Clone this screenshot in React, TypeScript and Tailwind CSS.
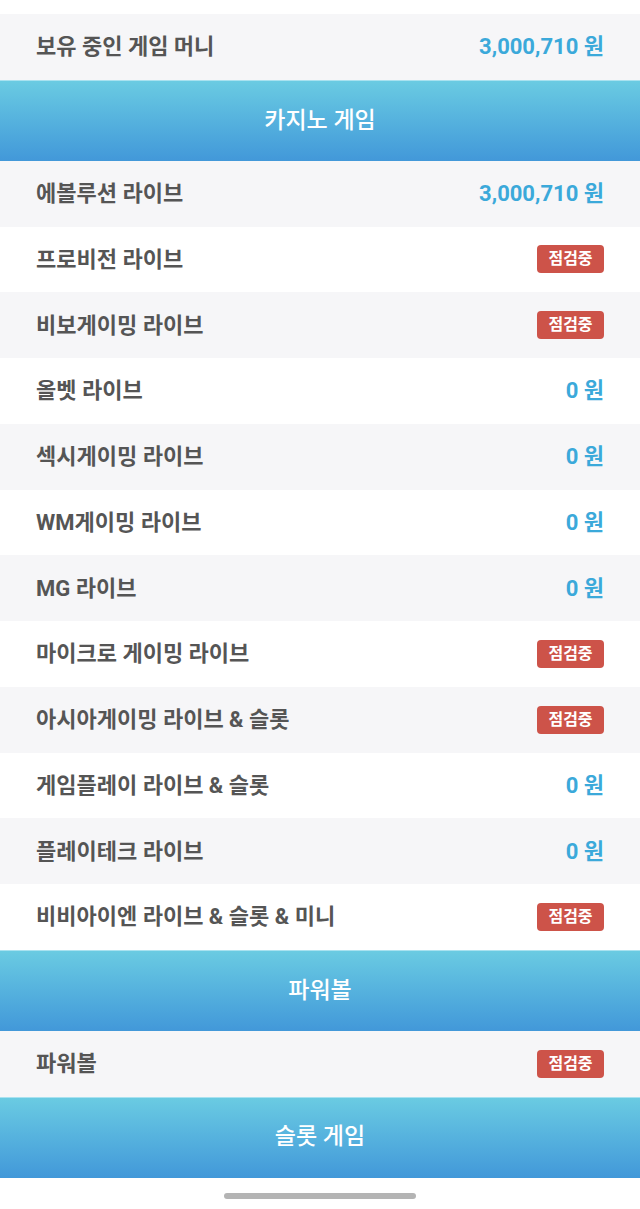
import React from 'react';

type Row = { name: string; amount?: string };

const casinoRows: Row[] = [
  { name: '에볼루션 라이브', amount: '3,000,710' },
  { name: '프로비전 라이브' },
  { name: '비보게이밍 라이브' },
  { name: '올벳 라이브', amount: '0' },
  { name: '섹시게이밍 라이브', amount: '0' },
  { name: 'WM게이밍 라이브', amount: '0' },
  { name: 'MG 라이브', amount: '0' },
  { name: '마이크로 게이밍 라이브' },
  { name: '아시아게이밍 라이브 & 슬롯' },
  { name: '게임플레이 라이브 & 슬롯', amount: '0' },
  { name: '플레이테크 라이브', amount: '0' },
  { name: '비비아이엔 라이브 & 슬롯 & 미니' },
];

const font = { fontFamily: 'Roboto, "Noto Sans CJK KR", "Noto Sans", sans-serif' };

function Header({ title }: { title: string }) {
  return (
    <div className="h-[81px] flex items-center justify-center border-t border-[#a9e2f0] bg-gradient-to-b from-[#6acbe2] to-[#4298d9]">
      <span className="text-[23px] font-medium text-white">{title}</span>
    </div>
  );
}

function Badge() {
  return (
    <span className="inline-flex items-center justify-center w-[67px] h-[28px] rounded-[4px] bg-[#cd5349] text-white text-[16px] font-bold">
      점검중
    </span>
  );
}

function ItemRow({ row, gray }: { row: Row; gray: boolean }) {
  return (
    <div className={`h-[65.75px] flex items-center justify-between pl-[36px] pr-[36px] ${gray ? 'bg-[#f6f6f8]' : 'bg-white'}`}>
      <span className="text-[22px] font-bold text-[#555555]">{row.name}</span>
      {row.amount !== undefined ? (
        <span className="text-[22px] font-bold text-[#3ba9da]">{row.amount} 원</span>
      ) : (
        <Badge />
      )}
    </div>
  );
}

export default function App() {
  return (
    <div className="w-[640px] h-[1209px] bg-white overflow-hidden" style={font}>
      <div className="h-[14px]" />
      <ItemRow row={{ name: '보유 중인 게임 머니', amount: '3,000,710' }} gray />
      <Header title="카지노 게임" />
      {casinoRows.map((r, i) => (
        <ItemRow key={r.name} row={r} gray={i % 2 === 0} />
      ))}
      <Header title="파워볼" />
      <ItemRow row={{ name: '파워볼' }} gray />
      <Header title="슬롯 게임" />
      <div className="flex justify-center pt-[15px]">
        <div className="w-[192px] h-[6px] rounded-full bg-[#b4b4b4]" />
      </div>
    </div>
  );
}
